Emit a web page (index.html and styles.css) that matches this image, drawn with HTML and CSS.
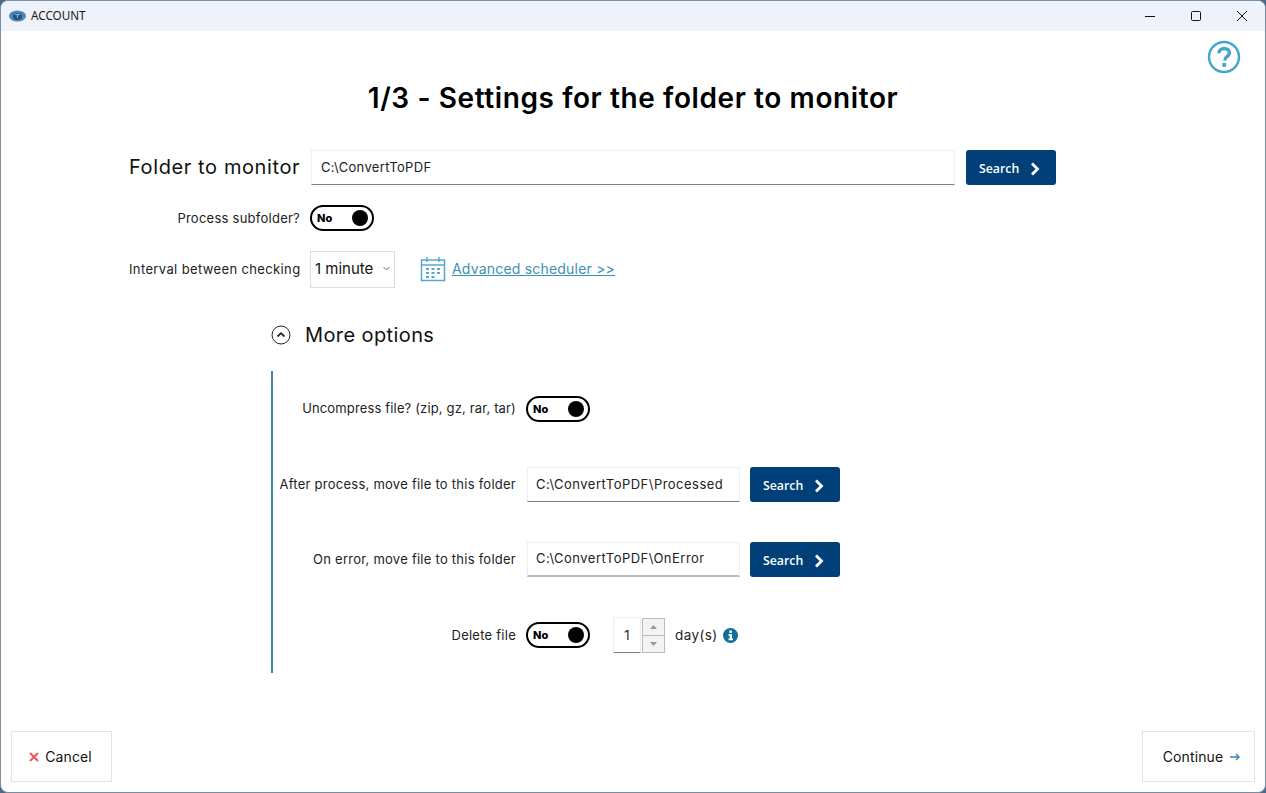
FILE: index.html
```
<!DOCTYPE html>
<html lang="en">
<head>
<meta charset="utf-8">
<title>ACCOUNT</title>
<link rel="stylesheet" href="styles.css">
</head>
<body>
<div class="window">
  <header class="titlebar">
    <svg class="app-icon" width="17" height="12" viewBox="0 0 17 12"><ellipse cx="8.500" cy="6" rx="8.500" ry="5.500" fill="#4a86bf"/><ellipse cx="8.500" cy="6.500" rx="4.500" ry="3.500" fill="#2a4f74"/><path d="M6 4.500h5M8.500 4.500v3.500" stroke="#8fb6d8" stroke-width="1.100"/></svg>
    <span class="app-name">ACCOUNT</span>
    <div class="win-controls">
      <svg width="10" height="10" viewBox="0 0 10 10"><path d="M0 5.500h10" stroke="#111" stroke-width="1"/></svg>
      <svg width="10" height="10" viewBox="0 0 10 10"><rect x=".5" y=".5" width="9" height="9" rx="1" fill="none" stroke="#111"/></svg>
      <svg width="10" height="10" viewBox="0 0 10 10"><path d="M0 0l10 10M10 0L0 10" stroke="#111" stroke-width="1"/></svg>
    </div>
  </header>

  <main class="content">
    <svg class="help" width="34" height="34" viewBox="0 0 34 34"><circle cx="17" cy="17" r="15" fill="none" stroke="#41a5cc" stroke-width="2.400"/><path d="M12 13.200c0-3 2.300-4.700 5.200-4.700 3 0 5.200 1.700 5.200 4.300 0 2.100-1.200 3.100-2.700 4.100-1.300.9-1.700 1.400-1.700 3v.6" fill="none" stroke="#41a5cc" stroke-width="3.400"/><rect x="15.300" y="23" width="3.800" height="3.800" fill="#41a5cc"/></svg>
    <h1 class="title">1/3 - Settings for the folder to monitor</h1>

    <section class="main-form">
      <div class="row row-folder">
        <label class="label label-large">Folder to monitor</label>
        <div class="field field-wide">C:\ConvertToPDF</div>
        <button class="btn-search">Search <svg width="10" height="14" viewBox="0 0 10 14"><path d="M2 1.500L7.500 7 2 12.500" fill="none" stroke="#fff" stroke-width="2.800"/></svg></button>
      </div>
      <div class="row row-sub">
        <label class="label">Process subfolder?</label>
        <div class="toggle toggle-main"><span>No</span><i class="knob"></i></div>
      </div>
      <div class="row row-interval">
        <label class="label">Interval between checking</label>
        <div class="select">1 minute <svg width="7" height="5" viewBox="0 0 7 5"><path d="M.5 1l3 3 3-3" fill="none" stroke="#666"/></svg></div>
        <svg class="cal" width="26" height="26" viewBox="0 0 26 26" fill="none" stroke="#55a9cc" stroke-width="1.500"><rect x="1.500" y="4" width="23" height="20.500"/><path d="M1.500 9h23M7 1v5M19 1v5"/><path d="M6 13h3M11.500 13h3M17 13h3M6 17h3M11.500 17h3M17 17h3M6 21h3M11.500 21h3" stroke-width="1.800"/></svg>
        <a class="adv-link" href="#">Advanced scheduler &gt;&gt;</a>
      </div>
    </section>

    <section class="more">
      <div class="more-head">
        <svg width="20" height="20" viewBox="0 0 20 20" fill="none" stroke="#222"><circle cx="10" cy="10" r="9"/><path d="M6.500 11.500L10 8.200l3.500 3.300" stroke-width="1.800"/></svg>
        <span>More options</span>
      </div>
      <div class="more-panel">
        <div class="opt opt-1">
          <label class="opt-label opt-label-tight">Uncompress file? (zip, gz, rar, tar)</label>
          <div class="toggle"><span>No</span><i class="knob"></i></div>
        </div>
        <div class="opt opt-2">
          <label class="opt-label">After process, move file to this folder</label>
          <div class="field field-mid">C:\ConvertToPDF\Processed</div>
          <button class="btn-search">Search <svg width="10" height="14" viewBox="0 0 10 14"><path d="M2 1.500L7.500 7 2 12.500" fill="none" stroke="#fff" stroke-width="2.800"/></svg></button>
        </div>
        <div class="opt opt-3">
          <label class="opt-label">On error, move file to this folder</label>
          <div class="field field-mid field-soft">C:\ConvertToPDF\OnError</div>
          <button class="btn-search">Search <svg width="10" height="14" viewBox="0 0 10 14"><path d="M2 1.500L7.500 7 2 12.500" fill="none" stroke="#fff" stroke-width="2.800"/></svg></button>
        </div>
        <div class="opt opt-4">
          <label class="opt-label opt-label-flat">Delete file</label>
          <div class="toggle"><span>No</span><i class="knob"></i></div>
          <div class="num">1</div>
          <div class="spin">
            <div class="spin-btn"><svg width="7" height="4" viewBox="0 0 7 4"><path d="M0 4l3.500-4L7 4z" fill="#999"/></svg></div>
            <div class="spin-btn"><svg width="7" height="4" viewBox="0 0 7 4"><path d="M0 0l3.500 4L7 0z" fill="#999"/></svg></div>
          </div>
          <span class="days">day(s)</span>
          <svg class="info" width="15" height="15" viewBox="0 0 15 15"><circle cx="7.500" cy="7.500" r="7.500" fill="#0f6f96"/><rect x="6.300" y="2.500" width="2.600" height="2.400" fill="#fff"/><path d="M5.500 6h3.400v4.600h1.100v1.700H5.500v-1.700h1.100V7.700H5.500z" fill="#fff"/></svg>
        </div>
      </div>
    </section>
  </main>

  <footer class="footer">
    <button class="btn-foot btn-cancel"><svg width="10" height="10" viewBox="0 0 10 10"><path d="M1 1l8 8M9 1L1 9" stroke="#f4525a" stroke-width="2"/></svg>Cancel</button>
    <button class="btn-foot btn-continue">Continue <svg width="10" height="8" viewBox="0 0 10 8"><path d="M0 4h9M6 1l3 3-3 3" fill="none" stroke="#2f86ad" stroke-width="1.300"/></svg></button>
  </footer>
</div>
</body>
</html>
```
FILE: styles.css
```
* { box-sizing: border-box; }
html, body { margin: 0; height: 100%; background: #4a6a8a; }
body { font-family: Inter, "Liberation Sans", sans-serif; color: #111; overflow: hidden; }

.window {
  width: 1266px; height: 793px;
  background: #fff;
  border: 1px solid #7b8da0;
  border-radius: 8px;
  display: flex; flex-direction: column;
  overflow: hidden;
}

.titlebar {
  height: 30px; flex: none;
  background: #eef2fa;
  display: flex; align-items: center;
  padding-left: 8px;
}
.app-name { margin-left: 5px; padding-bottom: 2px; font: 11.700px "Noto Sans", sans-serif; color: #1a1a1a; }
.win-controls { margin-left: auto; display: flex; gap: 36px; padding-right: 18px; }
.win-controls svg { display: block; }

.content { position: relative; flex: 1; display: flex; flex-direction: column; }
.help { position: absolute; right: 24px; top: 9px; }
.title {
  margin: 49px 0 0; text-align: center;
  font-size: 28px; line-height: 36px; font-weight: 600; letter-spacing: .6px; color: #000;
}

.main-form { margin: 34px 0 0 128px; display: flex; flex-direction: column; }
.row { display: flex; align-items: center; }
.row-sub { margin-top: 20px; }
.row-interval { margin-top: 20px; }
.label { width: 171px; margin-right: 11px; text-align: right; font-size: 13px; letter-spacing: .25px; white-space: nowrap; color: #222; }
.label-large { font-size: 20px; letter-spacing: .6px; padding-bottom: 2px; color: #111; }
.row-interval .label { letter-spacing: .37px; padding-bottom: 2px; }

.field {
  height: 35px; padding: 0 0 2px 9px;
  border: 1px solid #eee; border-bottom: 1px solid #808080;
  display: flex; align-items: center;
  font-size: 13px; letter-spacing: .48px; color: #222;
}
.field-wide { width: 644px; letter-spacing: .33px; }
.field-mid { width: 213px; margin-left: 1px; padding-left: 8px; }
.field-soft { border-bottom: 2px solid #bbb; }

.btn-search {
  width: 90px; height: 35px; margin-left: 11px;
  background: #003f78; border: 0; border-radius: 3px;
  color: #fff; font: 600 12.300px "Open Sans", sans-serif;
  display: flex; align-items: center; gap: 11px;
  padding: 2px 0 0 13px;
}

.toggle {
  width: 64px; height: 26px; position: relative;
  border: 2px solid #000; border-radius: 13px;
  background: #fff;
  display: flex; align-items: center; padding-left: 5px;
  font-size: 11px; font-weight: 800; color: #000;
}
.toggle-main { margin-left: -1px; }
.knob { position: absolute; right: 4px; top: 3px; width: 16px; height: 16px; border-radius: 50%; background: #000; }

.select {
  width: 85px; height: 37px; margin-left: -1px; border: 1px solid #ddd;
  display: flex; align-items: center; justify-content: space-between;
  padding: 0 4px 2px 4px; font-size: 15px; color: #111;
}
.cal { margin: 0 0 2px 25px; }
.adv-link { margin-left: 6px; padding-bottom: 2px; font-size: 14px; letter-spacing: .2px; color: #3c8fb5; text-decoration: underline; }

.more { margin-left: 270px; }
.more-head { margin-top: 35px; height: 24px; display: flex; align-items: center; gap: 14px; font-size: 20px; letter-spacing: .4px; color: #111; }
.more-panel {
  margin-top: 24px; height: 302px; width: 600px;
  border-left: 2px solid #3f8cab;
  display: flex; flex-direction: column;
}
.opt { display: flex; align-items: center; position: relative; }
.opt-label { width: 243px; margin-right: 10px; padding-bottom: 2px; text-align: right; font-size: 13px; letter-spacing: .25px; color: #222; white-space: nowrap; }
.opt-label-tight { letter-spacing: .15px; }
.opt-label-flat { padding-bottom: 0; }
.opt-1 { margin-top: 25px; }
.opt-2 { margin-top: 45px; }
.opt-3 { margin-top: 40px; }
.opt-4 { margin-top: 40px; }
.opt .btn-search { margin-left: 10px; }

.num {
  width: 28px; height: 36px; margin-left: 23px;
  border: 1px solid #eee; border-bottom: 1px solid #808080;
  display: flex; align-items: center; justify-content: center; font-size: 13px; color: #222;
}
.spin { width: 23px; height: 35px; margin: 1px 0 0 1px; display: flex; flex-direction: column; }
.spin-btn { flex: 1; border: 1px solid #bbb; background: #f3f3f3; display: flex; align-items: center; justify-content: center; }
.spin-btn + .spin-btn { border-top: 0; }
.spin-btn svg { display: block; }
.days { margin-left: 10px; font-size: 13.500px; letter-spacing: .4px; color: #222; }
.info { margin-left: 5px; }

.footer { height: 61px; flex: none; display: flex; justify-content: space-between; padding: 0 10px; }
.btn-foot {
  height: 51px; background: #fff; border: 1px solid #e3e3e3;
  display: flex; align-items: center; justify-content: center;
  font-family: Inter, sans-serif; font-size: 14px; letter-spacing: .1px; color: #111;
}
.btn-cancel { width: 101px; gap: 6px; padding: 0 2px 0 0; }
.btn-continue { width: 113px; gap: 7px; padding: 0 0 0 6px; }
```
